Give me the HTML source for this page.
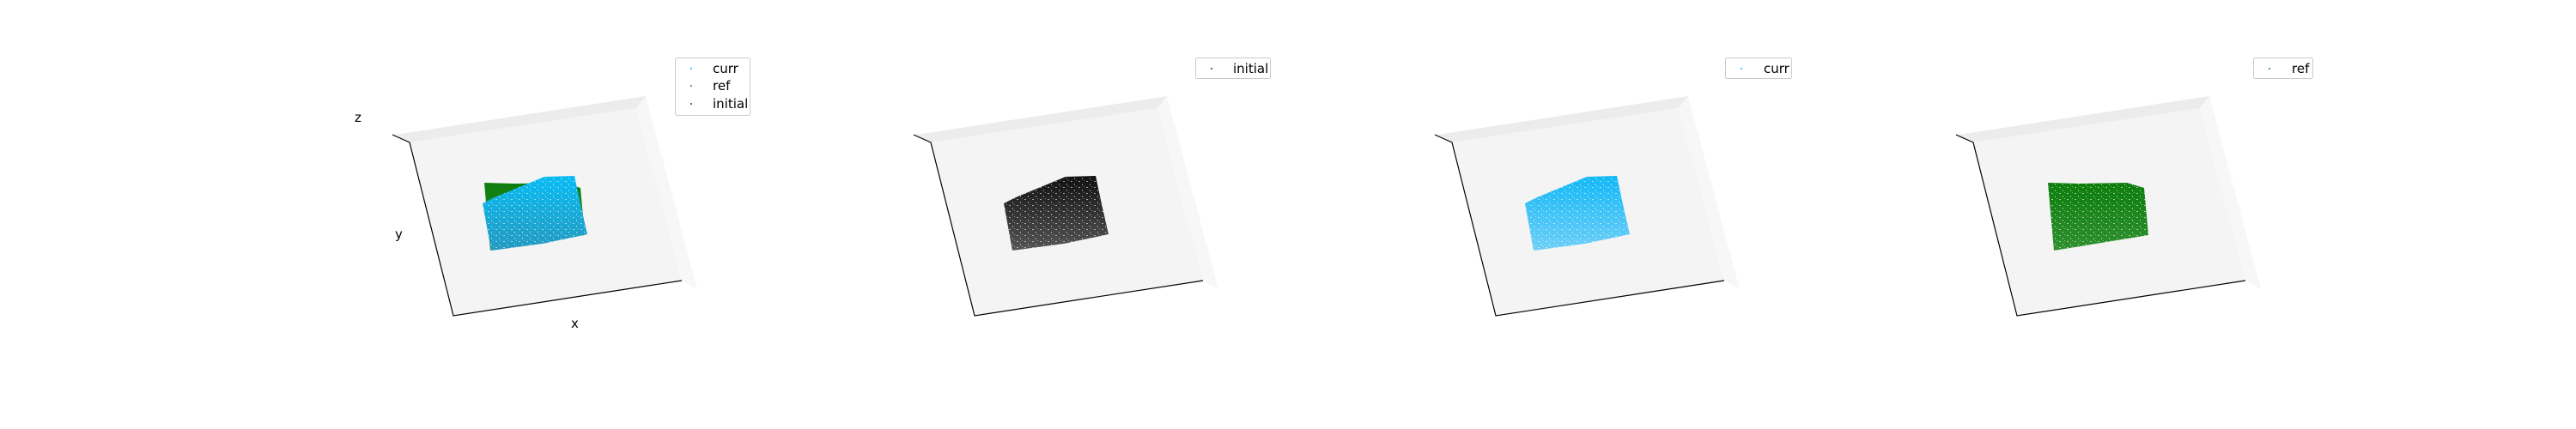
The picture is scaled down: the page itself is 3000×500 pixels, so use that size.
<!DOCTYPE html>
<html><head><style>
html,body{margin:0;padding:0;background:#fff;width:3000px;height:500px;overflow:hidden}
svg text{font-family:"DejaVu Sans","Liberation Sans",sans-serif;font-size:15px;fill:#000}
</style></head><body>
<svg width="3000" height="500" viewBox="0 0 3000 500" xmlns="http://www.w3.org/2000/svg">
<defs>
<linearGradient id="gk" x1="0" y1="0" x2="0" y2="1"><stop offset="0" stop-color="#111"/><stop offset="1" stop-color="#555"/></linearGradient>
<linearGradient id="gc" x1="0" y1="0" x2="0" y2="1"><stop offset="0" stop-color="#12b8f6"/><stop offset="1" stop-color="#6fcff7"/></linearGradient>
<linearGradient id="gg" x1="0" y1="0" x2="0" y2="1"><stop offset="0" stop-color="#0d7d0d"/><stop offset="1" stop-color="#2f902f"/></linearGradient>
<linearGradient id="gm" x1="0" y1="0" x2="0" y2="1"><stop offset="0" stop-color="#08bcf4"/><stop offset="1" stop-color="#259ac0"/></linearGradient>
<pattern id="sp" width="9" height="7" patternUnits="userSpaceOnUse">
<rect x="1" y="1" width="2" height="1" fill="#fff" opacity="0.55"/>
<rect x="5" y="4" width="1" height="2" fill="#fff" opacity="0.45"/>
<rect x="7" y="0" width="1" height="1" fill="#fff" opacity="0.4"/>
</pattern>
<g id="axes">
<polygon points="460,157 752,112 741,126 477,166" fill="#ececec"/>
<polygon points="752,112 812,337 794,327 741,126" fill="#f7f7f7"/>
<polygon points="477,166 741,126 794,327 528,368" fill="#f4f4f4"/>
<polyline points="457,157 477,166 528,368 794,327" fill="none" stroke="#000" stroke-width="1.2"/>
</g>
<polygon id="cl" points="562,237 576,230 634,206 669,205 676,238 684,273 632,284 572,292"/>
<polygon id="gr" points="564,213 600,214 656,213 676,219 681,274 571,292"/>
</defs>

<!-- panel 1 -->
<use href="#axes"/>
<use href="#gr" fill="url(#gg)"/>
<use href="#cl" fill="url(#gm)"/>
<use href="#cl" fill="url(#sp)"/>
<text x="413" y="142">z</text>
<text x="460" y="278">y</text>
<text x="665" y="382">x</text>
<rect x="786.5" y="67.5" width="87" height="67" rx="2" fill="#fff" stroke="#ccc"/>
<circle cx="805" cy="80" r="1" fill="#00bfff"/>
<circle cx="805" cy="100" r="1" fill="#228b22"/>
<circle cx="805" cy="121" r="1" fill="#333"/>
<text x="830" y="85">curr</text>
<text x="830" y="105">ref</text>
<text x="830" y="126">initial</text>

<!-- panel 2 -->
<g transform="translate(607,0)">
<use href="#axes"/>
<use href="#cl" fill="url(#gk)"/>
<use href="#cl" fill="url(#sp)"/>
</g>
<rect x="1392.5" y="67.5" width="87" height="24" rx="2" fill="#fff" stroke="#ccc"/>
<circle cx="1411" cy="80" r="1" fill="#333"/>
<text x="1436" y="85">initial</text>

<!-- panel 3 -->
<g transform="translate(1214,0)">
<use href="#axes"/>
<use href="#cl" fill="url(#gc)"/>
<use href="#cl" fill="url(#sp)"/>
</g>
<rect x="2009.5" y="67.5" width="77" height="24" rx="2" fill="#fff" stroke="#ccc"/>
<circle cx="2028" cy="80" r="1" fill="#00bfff"/>
<text x="2054" y="85">curr</text>

<!-- panel 4 -->
<g transform="translate(1821,0)">
<use href="#axes"/>
<use href="#gr" fill="url(#gg)"/>
<use href="#gr" fill="url(#sp)"/>
</g>
<rect x="2624.5" y="67.5" width="69" height="24" rx="2" fill="#fff" stroke="#ccc"/>
<circle cx="2643" cy="80" r="1" fill="#228b22"/>
<text x="2669" y="85">ref</text>
</svg>
</body></html>
